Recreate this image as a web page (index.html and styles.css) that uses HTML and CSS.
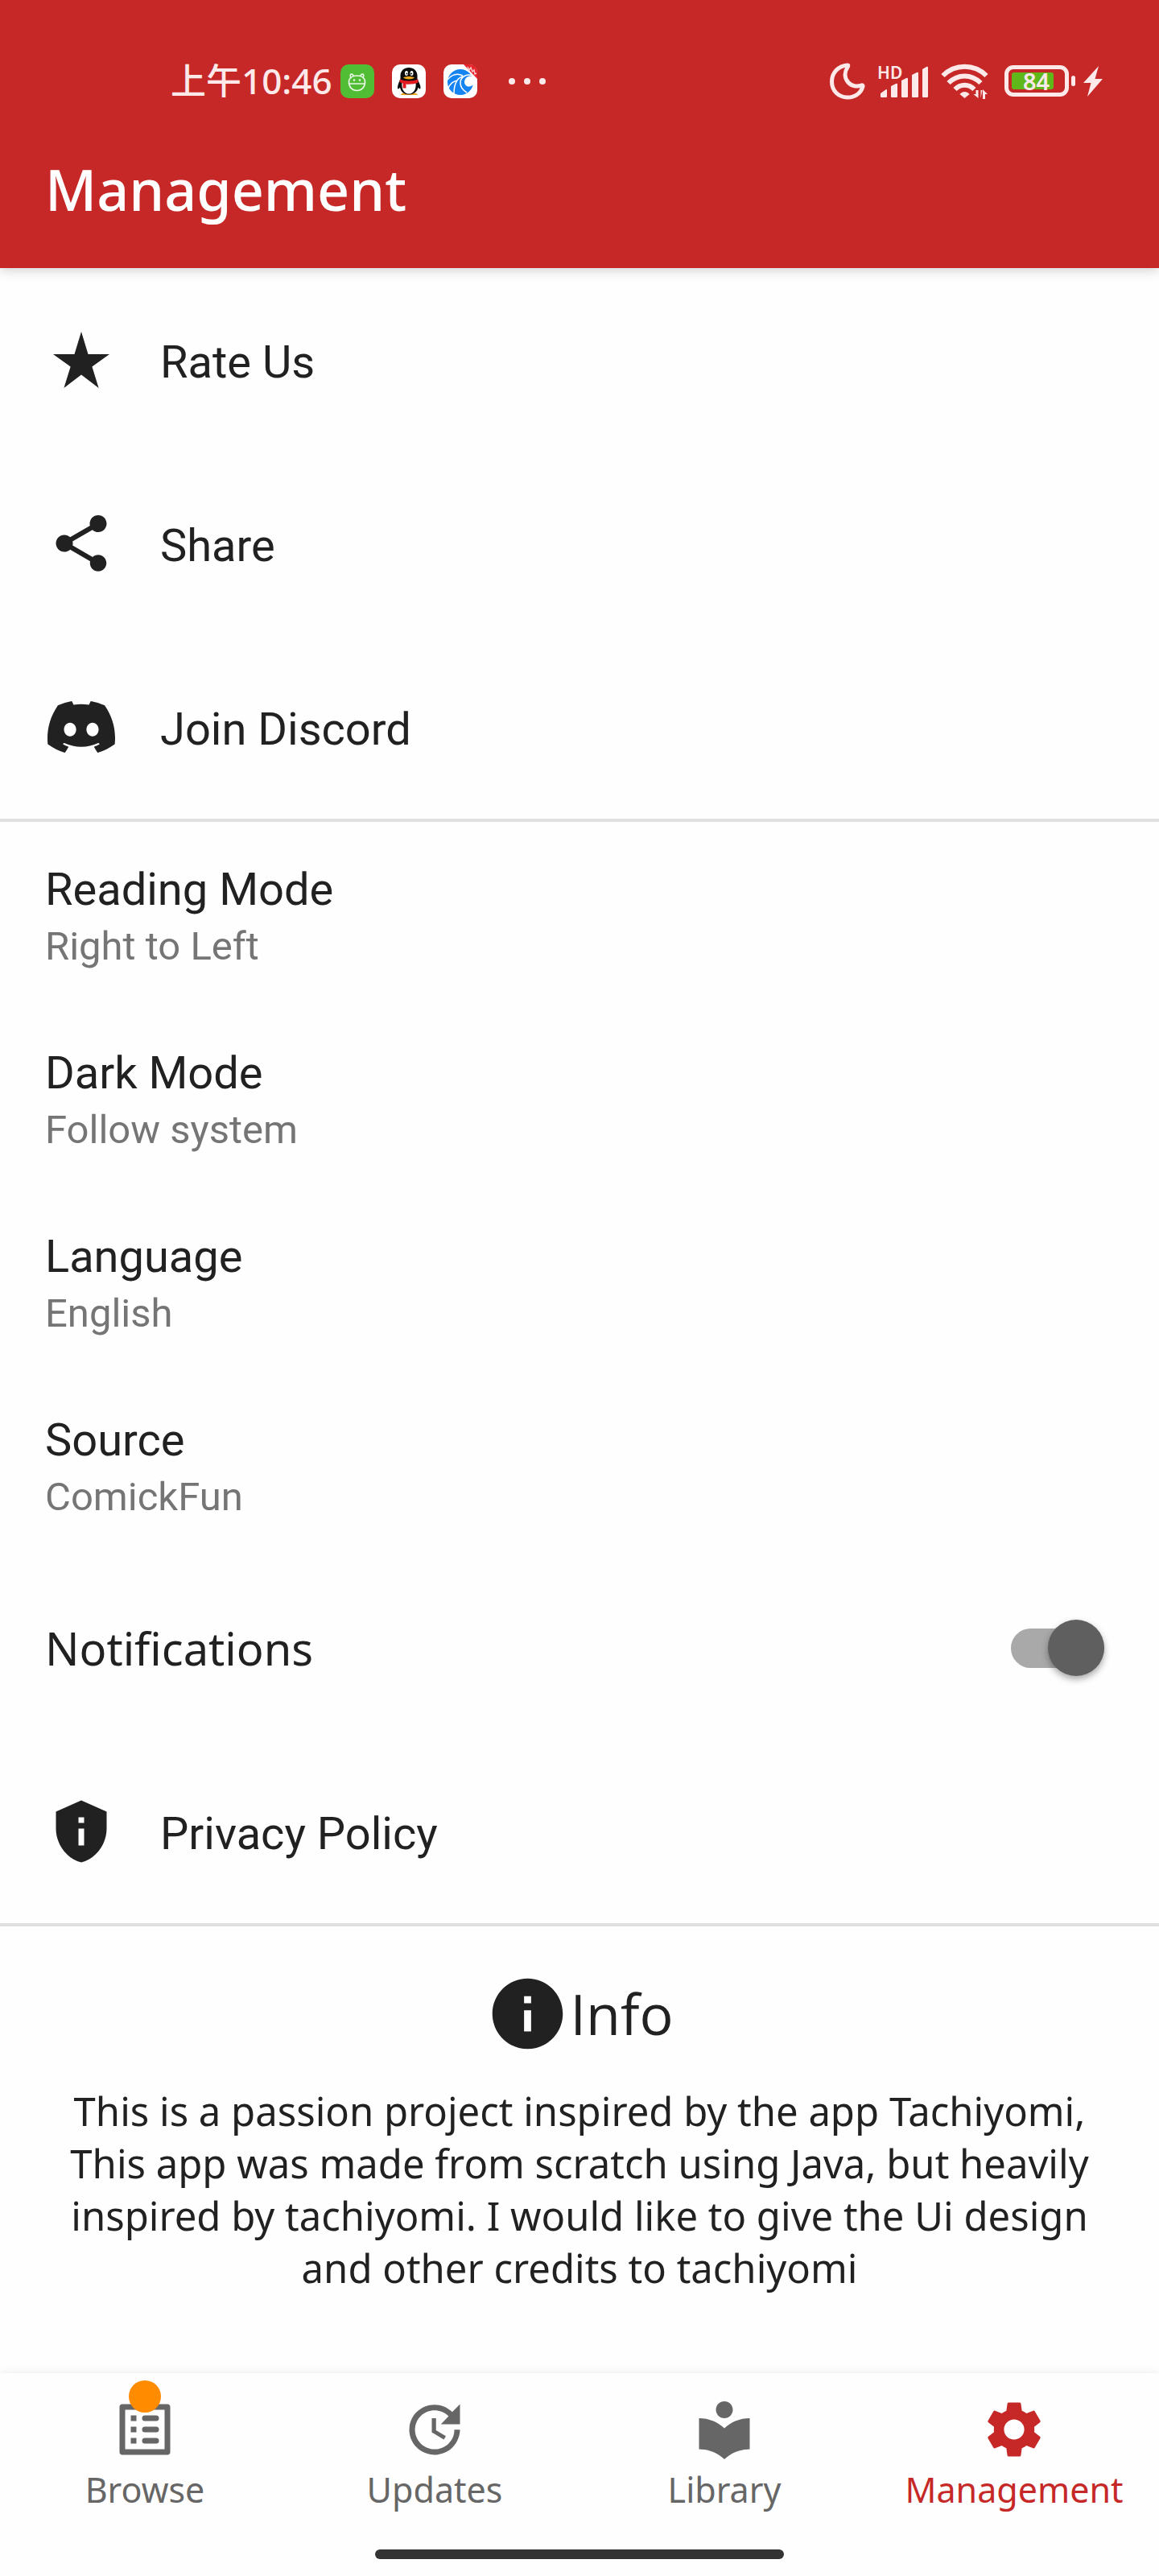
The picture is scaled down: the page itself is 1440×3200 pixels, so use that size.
FILE: index.html
```html
<!DOCTYPE html>
<html lang="en">
<head>
  <meta charset="utf-8">
  <meta name="viewport" content="width=device-width, initial-scale=1">
  <title>Management</title>
  <link rel="stylesheet" href="styles.css">
</head>
<body>
  <header class="app-bar">
    <div class="status">
      <div class="status-left">
        <time class="clock" datetime="10:46" lang="zh">上午10:46</time>
        <svg class="app-icon" viewBox="0 0 42 42" aria-hidden="true">
          <rect width="42" height="42" rx="10" fill="#50bd35"/>
          <path d="M10.500 22c0-5 4-8 10-8s10 3 10 8c0 6-4 10.500-10 10.500S10.500 28 10.500 22zM11 24h19M13 16.500c-2-3 0-5.500 2-4 1 .5 1 1.500 1 2M28 16.500c2-3 0-5.500-2-4-1 .5-1 1.500-1 2" fill="none" stroke="#eaf8e6" stroke-width="1.700" stroke-linecap="round"/>
          <circle cx="17" cy="19.500" r="1.300" fill="#eaf8e6"/><circle cx="24" cy="19.500" r="1.300" fill="#eaf8e6"/>
        </svg>
        <svg class="app-icon" viewBox="0 0 42 42" aria-hidden="true">
          <rect width="42" height="42" rx="10" fill="#fff"/>
          <path d="M11 38c0-2 3-3 9-3s12 1 12 3z" fill="#eda51c"/>
          <path d="M21 4c-6 0-10.500 4-10.500 10v4C8.500 22 7 26 7 29c0 2 1.500 2 3-.5C11 34 15 37.500 21 37.500S31.500 34 32.500 28.500c1.500 2.500 3 2.500 3 .5 0-3-2-7-4-11v-4C31.500 8 27 4 21 4z" fill="#0b0b0b"/>
          <path d="M12.500 23c-1 8 3 13.500 8.500 13.500S30.500 31 29.500 23z" fill="#fff"/>
          <path d="M10 18.500c6 2.500 16 2.500 22.500 0v4c-4 2-11 2.500-15 2v5h-4v-6l-4-1.500z" fill="#e11b22"/>
          <ellipse cx="18" cy="11" rx="2" ry="3" fill="#fff"/><ellipse cx="24.500" cy="11" rx="2" ry="3" fill="#fff"/>
          <circle cx="18.500" cy="11.500" r="1" fill="#111"/><circle cx="24" cy="11.500" r="1" fill="#111"/>
          <path d="M14 16.500c3-2 11-2 14 0-3 2.500-11 2.500-14 0z" fill="#f2a81d"/>
        </svg>
        <svg class="app-icon" viewBox="0 0 42 42" aria-hidden="true">
          <rect width="42" height="42" rx="10" fill="#fff"/>
          <circle cx="21" cy="22" r="16" fill="#1583f2"/>
          <path d="M40 17c-4-3-8-3-11-1-4 3-4 9 0 11 3 1.500 7 0 9-3z" fill="#fff"/>
          <path d="M36 14c-8-3-15 2-15 9 0 5 3 9 8 12M26 15c-8 0-13 8-13 21M24 14C18 11 11 12 5 19M17 20c-5 1-9 5-11 9" fill="none" stroke="#fff" stroke-width="1.500"/>
          <path d="M25 0h7c6 0 10 4 10 10v8z" fill="#e8242c"/>
          <path d="M30 3l2 4 2-3 2 5 2-2 1 5 2-1" fill="none" stroke="#fbd0d0" stroke-width="1.400"/>
        </svg>
        <svg class="more" viewBox="0 0 48 10" aria-hidden="true">
          <circle cx="5" cy="5" r="4"/><circle cx="24" cy="5" r="4"/><circle cx="43" cy="5" r="4"/>
        </svg>
      </div>
      <div class="status-right">
        <svg width="44" height="46" viewBox="0 0 44 46" aria-hidden="true">
          <path d="M22 3C10 4 2.500 12.500 2.500 23.500 2.500 35 11 43 22 43c9 0 16.500-5 19-13.500.3-1.500-1-2-2-1.500-5 2-12 1-16-3.500-4.500-5-5.500-12-1-19C23 4 23 3 22 3z" fill="none" stroke="#fde9e9" stroke-width="5" stroke-linejoin="round"/>
        </svg>
        <span class="signal">
          <span class="hd">HD</span>
          <svg width="64" height="46" viewBox="0 0 64 46" aria-hidden="true">
            <path d="M4 42v-4l7-5q1-.5 1 1v8q0 1-1 1H5q-1 0-1-1zM17 42V29l6-3q2-1 2 1v15q0 1-1 1h-6q-1 0-1-1zM30 42V22l6-3q2-1 2 1v22q0 1-1 1h-6q-1 0-1-1zM43 42V15l6-3q2-1 2 1v29q0 1-1 1h-6q-1 0-1-1zM56 42V8l5-3q2-1 2 1v36q0 1-1 1h-5q-1 0-1-1z"/>
          </svg>
        </span>
        <svg width="60" height="46" viewBox="0 0 60 46" aria-hidden="true">
          <g fill="none" stroke="#fde9e9" stroke-width="6">
            <path d="M2.500 16c15-15 39-15 54 0"/><path d="M9.500 25c11.500-11.500 28.500-11.500 40 0"/><path d="M17.500 33c7-7 17-7 24 0"/>
          </g>
          <path d="M23.500 39c3-4 9-4 12 0l-6 5z"/>
          <path d="M46.500 34v10l-6-5h3v-5zM48.500 44V34M49.500 44V34h2M52 45V33l6 6h-3v6z"/>
        </svg>
        <span class="battery"><span class="charge">84</span></span>
        <svg class="bolt" width="24" height="40" viewBox="0 0 24 40" aria-hidden="true">
          <path d="M19 1 0 22h9.500L5 39 24 17h-9.500z"/>
        </svg>
      </div>
    </div>
    <h1 class="title">Management</h1>
  </header>

  <main class="content">
    <section class="group">
      <a class="row link-row" href="#rate">
        <svg class="icon" viewBox="0 0 24 24" aria-hidden="true"><path d="M14.430 10 12 2l-2.430 8H2l6.180 4.410L5.830 22 12 17.310 18.180 22l-2.350-7.590L22 10z"/></svg>
        <span class="label">Rate Us</span>
      </a>
      <a class="row link-row" href="#share">
        <svg class="icon" viewBox="0 0 24 24" aria-hidden="true"><path d="M18 16.080c-.76 0-1.440.3-1.960.77L8.910 12.700c.05-.23.09-.46.09-.7s-.04-.47-.09-.7l7.050-4.110c.54.5 1.250.81 2.040.81 1.660 0 3-1.340 3-3s-1.340-3-3-3-3 1.340-3 3c0 .24.040.47.090.7L8.040 9.810C7.500 9.310 6.790 9 6 9c-1.660 0-3 1.340-3 3s1.340 3 3 3c.79 0 1.500-.31 2.040-.81l7.120 4.160c-.05.21-.08.43-.08.65 0 1.610 1.310 2.920 2.920 2.920s2.920-1.310 2.920-2.920-1.310-2.920-2.920-2.920z"/></svg>
        <span class="label">Share</span>
      </a>
      <a class="row link-row" href="#discord">
        <svg class="icon" viewBox="0 0 24 24" aria-hidden="true"><path d="M20.317 4.3698a19.7913 19.7913 0 00-4.8851-1.5152.0741.0741 0 00-.0785.0371c-.211.3753-.4447.8648-.6083 1.2495-1.8447-.2762-3.68-.2762-5.4868 0-.1636-.3933-.4058-.8742-.6177-1.2495a.077.077 0 00-.0785-.037 19.7363 19.7363 0 00-4.8852 1.515.0699.0699 0 00-.0321.0277C.5334 9.0458-.319 13.5799.0992 18.0578a.0824.0824 0 00.0312.0561c2.0528 1.5076 4.0413 2.4228 5.9929 3.0294a.0777.0777 0 00.0842-.0276c.4616-.6304.8731-1.2952 1.226-1.9942a.076.076 0 00-.0416-.1057c-.6528-.2476-1.2743-.5495-1.8722-.8923a.077.077 0 01-.0076-.1277c.1258-.0943.2517-.1923.3718-.2914a.0743.0743 0 01.0776-.0105c3.9278 1.7933 8.18 1.7933 12.0614 0a.0739.0739 0 01.0785.0095c.1202.099.246.1981.3728.2924a.077.077 0 01-.0066.1276 12.2986 12.2986 0 01-1.873.8914.0766.0766 0 00-.0407.1067c.3604.698.7719 1.3628 1.225 1.9932a.076.076 0 00.0842.0286c1.961-.6067 3.9495-1.5219 6.0023-3.0294a.077.077 0 00.0313-.0552c.5004-5.177-.8382-9.6739-3.5485-13.6604a.061.061 0 00-.0312-.0286zM8.02 15.3312c-1.1825 0-2.1569-1.0857-2.1569-2.419 0-1.3332.9555-2.4189 2.157-2.4189 1.2108 0 2.1757 1.0952 2.1568 2.419 0 1.3332-.9555 2.4189-2.1569 2.4189zm7.9748 0c-1.1825 0-2.1569-1.0857-2.1569-2.419 0-1.3332.9554-2.4189 2.1569-2.4189 1.2108 0 2.1757 1.0952 2.1568 2.419 0 1.3332-.946 2.4189-2.1568 2.4189Z"/></svg>
        <span class="label">Join Discord</span>
      </a>
    </section>

    <section class="group">
      <button class="row setting" type="button"><span class="label">Reading Mode</span><span class="value">Right to Left</span></button>
      <button class="row setting" type="button"><span class="label">Dark Mode</span><span class="value">Follow system</span></button>
      <button class="row setting" type="button"><span class="label">Language</span><span class="value">English</span></button>
      <button class="row setting" type="button"><span class="label">Source</span><span class="value">ComickFun</span></button>
      <div class="row toggle-row">
        <label class="toggle-label" for="notifications">Notifications</label>
        <input class="switch" id="notifications" type="checkbox" role="switch" checked>
      </div>
      <a class="row link-row" href="#privacy">
        <svg class="icon" viewBox="0 0 24 24" aria-hidden="true"><path d="M12 1 3 5v6c0 5.550 3.840 10.740 9 12 5.160-1.260 9-6.450 9-12V5l-9-4zm-1 6h2v2h-2zm0 4h2v6h-2z"/></svg>
        <span class="label">Privacy Policy</span>
      </a>
    </section>

    <section class="info">
      <h2 class="info-title">
        <svg class="info-icon" viewBox="0 0 24 24" aria-hidden="true"><path d="M12 2C6.480 2 2 6.480 2 12s4.480 10 10 10 10-4.480 10-10S17.520 2 12 2zm1 15h-2v-6h2v6zm0-8h-2V7h2v2z"/></svg>
        Info
      </h2>
      <p class="info-text">This is a passion project inspired by the app Tachiyomi, This app was made from scratch using Java, but heavily inspired by tachiyomi. I would like to give the Ui design and other credits to tachiyomi</p>
    </section>
  </main>

  <footer class="bottom-bar">
    <nav class="tabs">
      <a class="tab" href="#browse">
        <span class="tab-icon">
          <svg class="icon" viewBox="0 0 24 24" aria-hidden="true"><path fill-rule="evenodd" d="M4 3h16c.6 0 1 .4 1 1v16c0 .6-.4 1-1 1H4c-.6 0-1-.4-1-1V4c0-.6.4-1 1-1zm1 2v14h14V5zM7 7h2v2H7zM7 11h2v2H7zM7 15h2v2H7zM12 7h4a1 1 0 010 2h-4a1 1 0 010-2zM12 11h4a1 1 0 010 2h-4a1 1 0 010-2zM12 15h4a1 1 0 010 2h-4a1 1 0 010-2z"/></svg>
          <span class="badge"></span>
        </span>
        Browse
      </a>
      <a class="tab" href="#updates">
        <span class="tab-icon"><svg class="icon" viewBox="0 0 24 24" aria-hidden="true"><path d="M21 10.120h-6.780l2.740-2.820c-2.730-2.700-7.150-2.800-9.880-.1-2.730 2.710-2.730 7.080 0 9.790s7.150 2.710 9.880 0C18.320 15.650 19 14.080 19 12.100h2c0 1.980-.88 4.550-2.640 6.290-3.510 3.480-9.210 3.480-12.720 0-3.500-3.470-3.530-9.110-.02-12.580s9.140-3.470 12.650 0L21 3v7.120zM12.500 8v4.250l3.500 2.080-.72 1.210L11 13V8h1.500z"/></svg></span>
        Updates
      </a>
      <a class="tab" href="#library">
        <span class="tab-icon"><svg class="icon" viewBox="0 0 24 24" aria-hidden="true"><path d="M12 11.550C9.640 9.350 6.480 8 3 8v11c3.480 0 6.640 1.350 9 3.550 2.360-2.190 5.520-3.550 9-3.550V8c-3.480 0-6.640 1.350-9 3.550zM12 8c1.660 0 3-1.340 3-3s-1.340-3-3-3-3 1.340-3 3 1.340 3 3 3z"/></svg></span>
        Library
      </a>
      <a class="tab active" href="#management" aria-current="page">
        <span class="tab-icon"><svg class="icon" viewBox="0 0 24 24" aria-hidden="true"><path d="M19.140 12.940c.04-.3.06-.61.06-.94 0-.32-.02-.64-.07-.94l2.030-1.580c.18-.14.23-.41.12-.61l-1.920-3.320c-.12-.22-.37-.29-.59-.22l-2.390.96c-.5-.38-1.030-.7-1.620-.94l-.36-2.540c-.04-.24-.24-.41-.48-.41h-3.840c-.24 0-.43.17-.47.41l-.36 2.540c-.59.24-1.130.57-1.620.94l-2.390-.96c-.22-.08-.47 0-.59.22L2.740 8.870c-.12.21-.08.47.12.61l2.030 1.580c-.05.3-.09.63-.09.94s.02.64.07.94l-2.030 1.580c-.18.14-.23.41-.12.61l1.920 3.320c.12.22.37.29.59.22l2.390-.96c.5.38 1.030.7 1.620.94l.36 2.540c.05.24.24.41.48.41h3.840c.24 0 .44-.17.47-.41l.36-2.540c.59-.24 1.130-.56 1.620-.94l2.390.96c.22.08.47 0 .59-.22l1.920-3.320c.12-.22.07-.47-.12-.61l-2.010-1.580zM12 15.600c-1.980 0-3.600-1.620-3.600-3.600s1.620-3.600 3.600-3.600 3.600 1.620 3.600 3.600-1.620 3.600-3.600 3.600z"/></svg></span>
        Management
      </a>
    </nav>
    <div class="home-bar"></div>
  </footer>
</body>
</html>
```

FILE: styles.css
```css
:root {
  --red: #c62828;
  --ink: #212121;
  --muted: #757575;
  --tab: #666;
  --status: #fde9e9;
  --surface: #fefefe;
  --ui: "Noto Sans", "Noto Sans CJK SC", sans-serif;
  --body: Roboto, sans-serif;
}

* {
  box-sizing: border-box;
}

body {
  margin: 0;
  min-height: 100vh;
  display: flex;
  flex-direction: column;
  background: var(--surface);
  color: var(--ink);
  font-family: var(--ui);
}

svg {
  display: block;
  flex: none;
  fill: currentColor;
}

a {
  color: inherit;
  text-decoration: none;
}

/* App bar */
.app-bar {
  background: var(--red);
  color: #fff;
  padding: 72px 56px 50px;
  box-shadow: 0 2px 14px rgba(0, 0, 0, 0.2);
}

.status {
  display: flex;
  justify-content: space-between;
  height: 57px;
  padding: 0 14px 0 156px;
  color: var(--status);
}

.status-left,
.status-right {
  display: flex;
  align-items: center;
}

.status-left {
  gap: 22px;
}

.status-right {
  gap: 15px;
}

.clock {
  margin-right: -12px;
  font-size: 44px;
  line-height: 57px;
  font-weight: 500;
  white-space: nowrap;
}

.app-icon {
  width: 42px;
  height: 42px;
}

.more {
  width: 48px;
  height: 10px;
  margin-left: 16px;
}

.signal {
  position: relative;
}

.hd {
  position: absolute;
  top: 0;
  left: 0;
  font-size: 21px;
  line-height: 24px;
  font-weight: 600;
}

.battery {
  position: relative;
  width: 80px;
  height: 39px;
  margin-left: 4px;
  padding: 4px;
  border: 5px solid var(--status);
  border-radius: 11px;
}

.battery::after {
  content: "";
  position: absolute;
  top: 8px;
  right: -13px;
  width: 5px;
  height: 13px;
  border-radius: 3px;
  background: var(--status);
}

.charge {
  display: block;
  width: 52px;
  height: 21px;
  padding-left: 14px;
  border-radius: 3px;
  background: #5fb71a;
  font-size: 29px;
  line-height: 21px;
  font-weight: 600;
}

.bolt {
  margin-left: 3px;
}

.title {
  margin: 59px 0 0;
  font-size: 70px;
  line-height: 95px;
  font-weight: 500;
}

/* Settings list */
.content {
  flex: 1;
}

.group {
  border-bottom: 4px solid #e0e0e0;
}

.row {
  display: flex;
  width: 100%;
  height: 228px;
  padding: 0 56px;
}

.link-row {
  align-items: center;
  gap: 56px;
  padding-left: 59px;
}

.icon {
  width: 84px;
  height: 84px;
}

.label {
  padding-top: 6px;
  font-family: var(--body);
  font-size: 56px;
  line-height: 66px;
}

.setting {
  flex-direction: column;
  justify-content: center;
  gap: 9px;
  border: 0;
  background: none;
  color: inherit;
  text-align: left;
}

.value {
  font-family: var(--body);
  font-size: 49px;
  line-height: 58px;
  color: var(--muted);
}

.toggle-row {
  align-items: center;
  justify-content: space-between;
  padding-right: 68px;
}

.toggle-label {
  font-size: 56px;
  line-height: 76px;
}

.switch {
  appearance: none;
  display: grid;
  align-items: center;
  width: 116px;
  height: 70px;
  margin: 0;
}

.switch::before,
.switch::after {
  content: "";
  grid-area: 1 / 1;
}

.switch::before {
  height: 49px;
  border-radius: 25px;
  background: #a9a9a9;
}

.switch::after {
  width: 70px;
  height: 70px;
  border-radius: 50%;
  background: #5f5f5f;
  box-shadow: 0 4px 9px rgba(0, 0, 0, 0.35);
}

.switch:checked::after {
  justify-self: end;
}

/* Info */
.info {
  padding: 56px 56px 35px;
  text-align: center;
}

.info-title {
  display: flex;
  align-items: center;
  justify-content: center;
  margin: 0 0 36px;
  font-family: "Open Sans", sans-serif;
  font-size: 70px;
  line-height: 95px;
  font-weight: 400;
}

.info-icon {
  width: 105px;
  height: 105px;
}

.info-text {
  margin: 0;
  font-size: 49px;
  line-height: 65px;
}

/* Bottom navigation */
.bottom-bar {
  padding: 28px 0 21px;
  background: var(--surface);
  box-shadow: 0 0 12px rgba(0, 0, 0, 0.08);
}

.tabs {
  display: flex;
}

.tab {
  flex: 1 1 0;
  display: flex;
  flex-direction: column;
  align-items: center;
  gap: 4px;
  color: var(--tab);
  font-size: 43px;
  line-height: 57px;
}

.tab.active {
  color: var(--red);
}

.tab-icon {
  position: relative;
}

.badge {
  position: absolute;
  top: -19px;
  left: 22px;
  width: 40px;
  height: 40px;
  border-radius: 50%;
  background: #ff8c00;
}

.home-bar {
  width: 508px;
  height: 12px;
  margin: 46px auto 0;
  border-radius: 6px;
  background: #333;
}
```
